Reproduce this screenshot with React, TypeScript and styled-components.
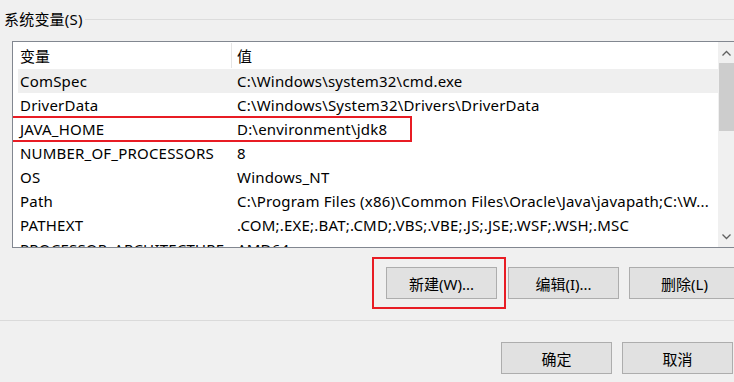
import styled, { createGlobalStyle } from 'styled-components';

const GlobalStyle = createGlobalStyle`
  html, body {
    margin: 0;
    padding: 0;
    background: #f0f0f0;
  }
  body {
    font-family: 'Noto Sans', 'Noto Sans CJK SC', sans-serif;
    font-size: 15px;
    color: #000;
  }
`;

const variables: { name: string; value: string }[] = [
  { name: 'ComSpec', value: 'C:\\Windows\\system32\\cmd.exe' },
  { name: 'DriverData', value: 'C:\\Windows\\System32\\Drivers\\DriverData' },
  { name: 'JAVA_HOME', value: 'D:\\environment\\jdk8' },
  { name: 'NUMBER_OF_PROCESSORS', value: '8' },
  { name: 'OS', value: 'Windows_NT' },
  {
    name: 'Path',
    value: 'C:\\Program Files (x86)\\Common Files\\Oracle\\Java\\javapath;C:\\W...',
  },
  { name: 'PATHEXT', value: '.COM;.EXE;.BAT;.CMD;.VBS;.VBE;.JS;.JSE;.WSF;.WSH;.MSC' },
  { name: 'PROCESSOR_ARCHITECTURE', value: 'AMD64' },
];

const Page = styled.div`
  width: 734px;
  height: 382px;
  overflow: hidden;
  background: #f0f0f0;
  display: flex;
  flex-direction: column;
`;

const GroupHeader = styled.div`
  display: flex;
  align-items: center;
  height: 20px;
  margin-top: 9px;
  padding-left: 4px;
  .label {
    white-space: nowrap;
    padding-right: 2px;
    line-height: 20px;
    letter-spacing: 0.2px;
  }
  .line {
    flex: 1;
    border-top: 1px solid #dcdcdc;
  }
`;

const ListBox = styled.div`
  margin: 12px 0 0 12px;
  width: 724px;
  height: 207px;
  box-sizing: border-box;
  border: 1px solid #828790;
  background: #fff;
  display: flex;
  flex-shrink: 0;
  overflow: hidden;
`;

const ListBody = styled.div`
  flex: 1;
  padding-left: 5px;
  overflow: hidden;
`;

const HeaderRow = styled.div`
  display: flex;
  height: 27px;
  align-items: center;
  .name {
    width: 211px;
    padding-left: 2px;
    align-self: stretch;
    display: flex;
    align-items: center;
    border-right: 1px solid #e5e5e5;
    margin: 1px 0;
  }
  .value {
    padding-left: 5px;
  }
`;

const Row = styled.div<{ $hover?: boolean; $marked?: boolean }>`
  position: relative;
  display: flex;
  align-items: center;
  height: 24px;
  white-space: nowrap;
  letter-spacing: 0.2px;
  background: ${(p) => (p.$hover ? '#efefef' : 'transparent')};
  .name {
    width: 213px;
    padding-left: 2px;
    box-sizing: border-box;
    flex-shrink: 0;
  }
  .value {
    padding-left: 6px;
  }
  ${(p) =>
    p.$marked &&
    `
    &::after {
      content: '';
      position: absolute;
      left: -7px;
      top: -1px;
      width: 401px;
      height: 26px;
      box-sizing: border-box;
      border: 2px solid #e81c24;
    }
  `}
`;

const ScrollBar = styled.div`
  width: 17px;
  flex-shrink: 0;
  background: #f0f0f0;
  display: flex;
  flex-direction: column;
  .arrow {
    height: 21px;
    display: flex;
    align-items: center;
    justify-content: center;
  }
  .thumb {
    height: 68px;
    margin: 0 1px;
    background: #cdcdcd;
  }
  .track {
    flex: 1;
  }
`;

const ButtonRow = styled.div<{ $end?: boolean }>`
  display: flex;
  align-items: center;
  justify-content: ${(p) => (p.$end ? 'flex-end' : 'flex-start')};
  gap: 10px;
`;

const Button = styled.button`
  width: 111px;
  height: 32px;
  flex-shrink: 0;
  box-sizing: border-box;
  background: #e1e1e1;
  border: 1px solid #adadad;
  font-family: inherit;
  font-size: 15px;
  color: #000;
  padding: 0;
`;

const Marked = styled.div`
  border: 2px solid #e81c24;
  padding: 8px 7px 8px 12px;
  margin-right: -8px;
`;

const Separator = styled.div`
  height: 1px;
  background: #dadada;
  margin-top: 11px;
`;

const Chevron = ({ up }: { up?: boolean }) => (
  <svg width="9" height="6" viewBox="0 0 9 6">
    <path
      d={up ? 'M0.5 5.5L4.5 1.5L8.5 5.5' : 'M0.5 0.5L4.5 4.5L8.5 0.5'}
      fill="none"
      stroke="#606060"
      strokeWidth="1.3"
    />
  </svg>
);

export default function App() {
  return (
    <Page>
      <GlobalStyle />
      <GroupHeader>
        <span className="label">系统变量(S)</span>
        <span className="line" />
      </GroupHeader>
      <ListBox>
        <ListBody>
          <HeaderRow>
            <div className="name">变量</div>
            <div className="value">值</div>
          </HeaderRow>
          {variables.map((v, i) => (
            <Row key={v.name} $hover={i === 0} $marked={v.name === 'JAVA_HOME'}>
              <div className="name">{v.name}</div>
              <div className="value">{v.value}</div>
            </Row>
          ))}
        </ListBody>
        <ScrollBar>
          <div className="arrow">
            <Chevron up />
          </div>
          <div className="thumb" />
          <div className="track" />
          <div className="arrow">
            <Chevron />
          </div>
        </ScrollBar>
      </ListBox>
      <ButtonRow style={{ marginTop: 9, marginLeft: 372 }}>
        <Marked>
          <Button>新建(W)...</Button>
        </Marked>
        <Button>编辑(I)...</Button>
        <Button>删除(L)</Button>
      </ButtonRow>
      <Separator />
      <ButtonRow $end style={{ marginTop: 21, paddingRight: 1 }}>
        <Button>确定</Button>
        <Button>取消</Button>
      </ButtonRow>
    </Page>
  );
}
